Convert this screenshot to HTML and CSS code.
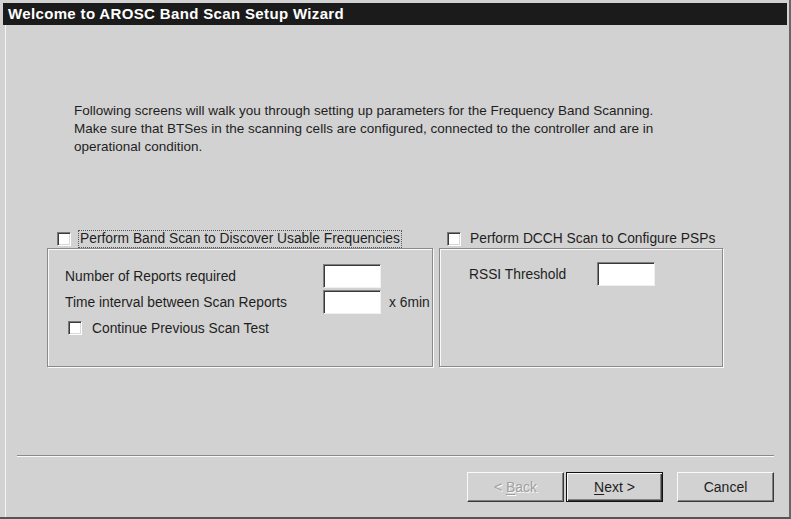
FILE: index.html
```html
<!DOCTYPE html>
<html>
<head>
<meta charset="utf-8">
<link rel="stylesheet" href="styles.css">
</head>
<body>
<div class="window">
  <div class="titlebar">Welcome to AROSC Band Scan Setup Wizard</div>
  <div class="frame">
    <p class="intro">Following screens will walk you through setting up parameters for the Frequency Band Scanning.<br>Make sure that BTSes in the scanning cells are configured, connected to the controller and are in<br>operational condition.</p>
    <div class="groups">
      <div class="group">
        <div class="grouphead head-left">
          <span class="cb"></span>
          <span class="focus">Perform Band Scan to Discover Usable Frequencies</span>
        </div>
        <div class="box box-left">
          <div class="row">
            <span>Number of Reports required</span>
            <span class="input"></span>
          </div>
          <div class="row">
            <span>Time interval between Scan Reports</span>
            <span class="input"></span>
            <span class="unit">x 6min</span>
          </div>
          <div class="checkrow">
            <span class="cb"></span>
            <span class="checklabel">Continue Previous Scan Test</span>
          </div>
        </div>
      </div>
      <div class="group">
        <div class="grouphead head-right">
          <span class="cb"></span>
          <span class="plainlabel">Perform DCCH Scan to Configure PSPs</span>
        </div>
        <div class="box box-right">
          <div class="row row-right">
            <span>RSSI Threshold</span>
            <span class="input"></span>
          </div>
        </div>
      </div>
    </div>
    <div class="separator"></div>
    <div class="buttons">
      <span class="btn disabled"><span>&lt; <u>B</u>ack</span></span>
      <span class="btn default"><span><u>N</u>ext &gt;</span></span>
      <span class="btn cancel"><span>Cancel</span></span>
    </div>
  </div>
</div>
</body>
</html>
```
FILE: styles.css
```css
* { box-sizing: border-box; }

body {
  margin: 0;
  background: #d2d2d2;
  font-family: "Liberation Sans", Arial, sans-serif;
  font-size: 13.8px;
  color: #1e1e1e;
}

.window {
  width: 791px;
  height: 519px;
  padding: 3px 0 0 3px;
  border-right: 2px solid #666;
  border-bottom: 2px solid #555;
  display: flex;
  flex-direction: column;
  background: #d2d2d2;
}

.titlebar {
  height: 22px;
  margin-right: 2px;
  background: #1b1b1b;
  color: #fff;
  font-weight: bold;
  font-size: 15px;
  letter-spacing: 0.35px;
  line-height: 22px;
  padding-left: 5px;
  white-space: nowrap;
}

.frame {
  flex: 1;
  margin-left: 2px;
  border-left: 1px solid #f4f4f4;
  display: flex;
  flex-direction: column;
}

.intro {
  margin: 77px 0 0 68px;
  font-size: 13.5px;
  line-height: 18px;
  white-space: nowrap;
}

.groups {
  display: grid;
  grid-template-columns: 386px 284px;
  column-gap: 6px;
  margin: 73px 0 0 41px;
}

.grouphead {
  height: 19px;
  display: flex;
  align-items: center;
  white-space: nowrap;
}

.head-left { padding-left: 10px; }
.head-right { padding-left: 8px; }

.cb {
  display: inline-block;
  width: 14px;
  height: 14px;
  background: #fff;
  border-top: 1px solid #7a7a7a;
  border-left: 1px solid #7a7a7a;
  border-right: 1px solid #fff;
  border-bottom: 1px solid #fff;
  box-shadow: inset 1px 1px 0 #3a3a3a, inset -1px -1px 0 #d8d8d8;
  flex: none;
}

.focus {
  margin-left: 7px;
  padding: 0 1px;
  line-height: 16px;
  border: 1px dotted #555;
}

.plainlabel { margin-left: 9px; }

.box {
  height: 119px;
  border: 1px solid #8a8a8a;
  box-shadow: inset 1px 1px 0 #fafafa, 1px 1px 0 #fafafa;
}

.box-left { padding: 15px 0 0 17px; }
.box-right { padding: 13px 0 0 29px; }

.row {
  display: grid;
  grid-template-columns: 258px 58px auto;
  align-items: center;
  height: 24px;
  margin-bottom: 2px;
  white-space: nowrap;
}

.row-right { grid-template-columns: 128px 58px; }

.input {
  display: block;
  width: 58px;
  height: 24px;
  background: #fff;
  border-top: 1px solid #808080;
  border-left: 1px solid #808080;
  border-right: 1px solid #f0f0f0;
  border-bottom: 1px solid #f0f0f0;
  box-shadow: inset 1px 1px 0 #3a3a3a;
}

.unit { margin-left: 8px; }

.checkrow {
  display: flex;
  align-items: center;
  height: 24px;
  margin-top: 1px;
  padding-left: 3px;
  white-space: nowrap;
}

.checklabel { margin-left: 10px; }

.separator {
  margin: 88px 15px 0 11px;
  height: 2px;
  border-top: 1px solid #8a8a8a;
  border-bottom: 1px solid #fafafa;
}

.buttons {
  display: flex;
  justify-content: flex-end;
  margin: 15px 15px 0 0;
}

.btn {
  display: flex;
  align-items: center;
  justify-content: center;
  width: 97px;
  height: 30px;
  background: #d2d2d2;
  border: 1px solid;
  border-color: #fafafa #3a3a3a #3a3a3a #fafafa;
  box-shadow: inset -1px -1px 0 #808080;
  font-size: 14px;
  white-space: pre;
}

.btn u { text-decoration: underline; text-underline-offset: 2px; }

.disabled {
  color: #a0a0a0;
  text-shadow: 1px 1px 0 #fafafa;
  margin-right: 2px;
}

.default {
  border: 1px solid #111;
  box-shadow: inset 1px 1px 0 #fafafa, inset -1px -1px 0 #3a3a3a, inset -2px -2px 0 #808080;
}

.cancel { margin-left: 14px; }
```
